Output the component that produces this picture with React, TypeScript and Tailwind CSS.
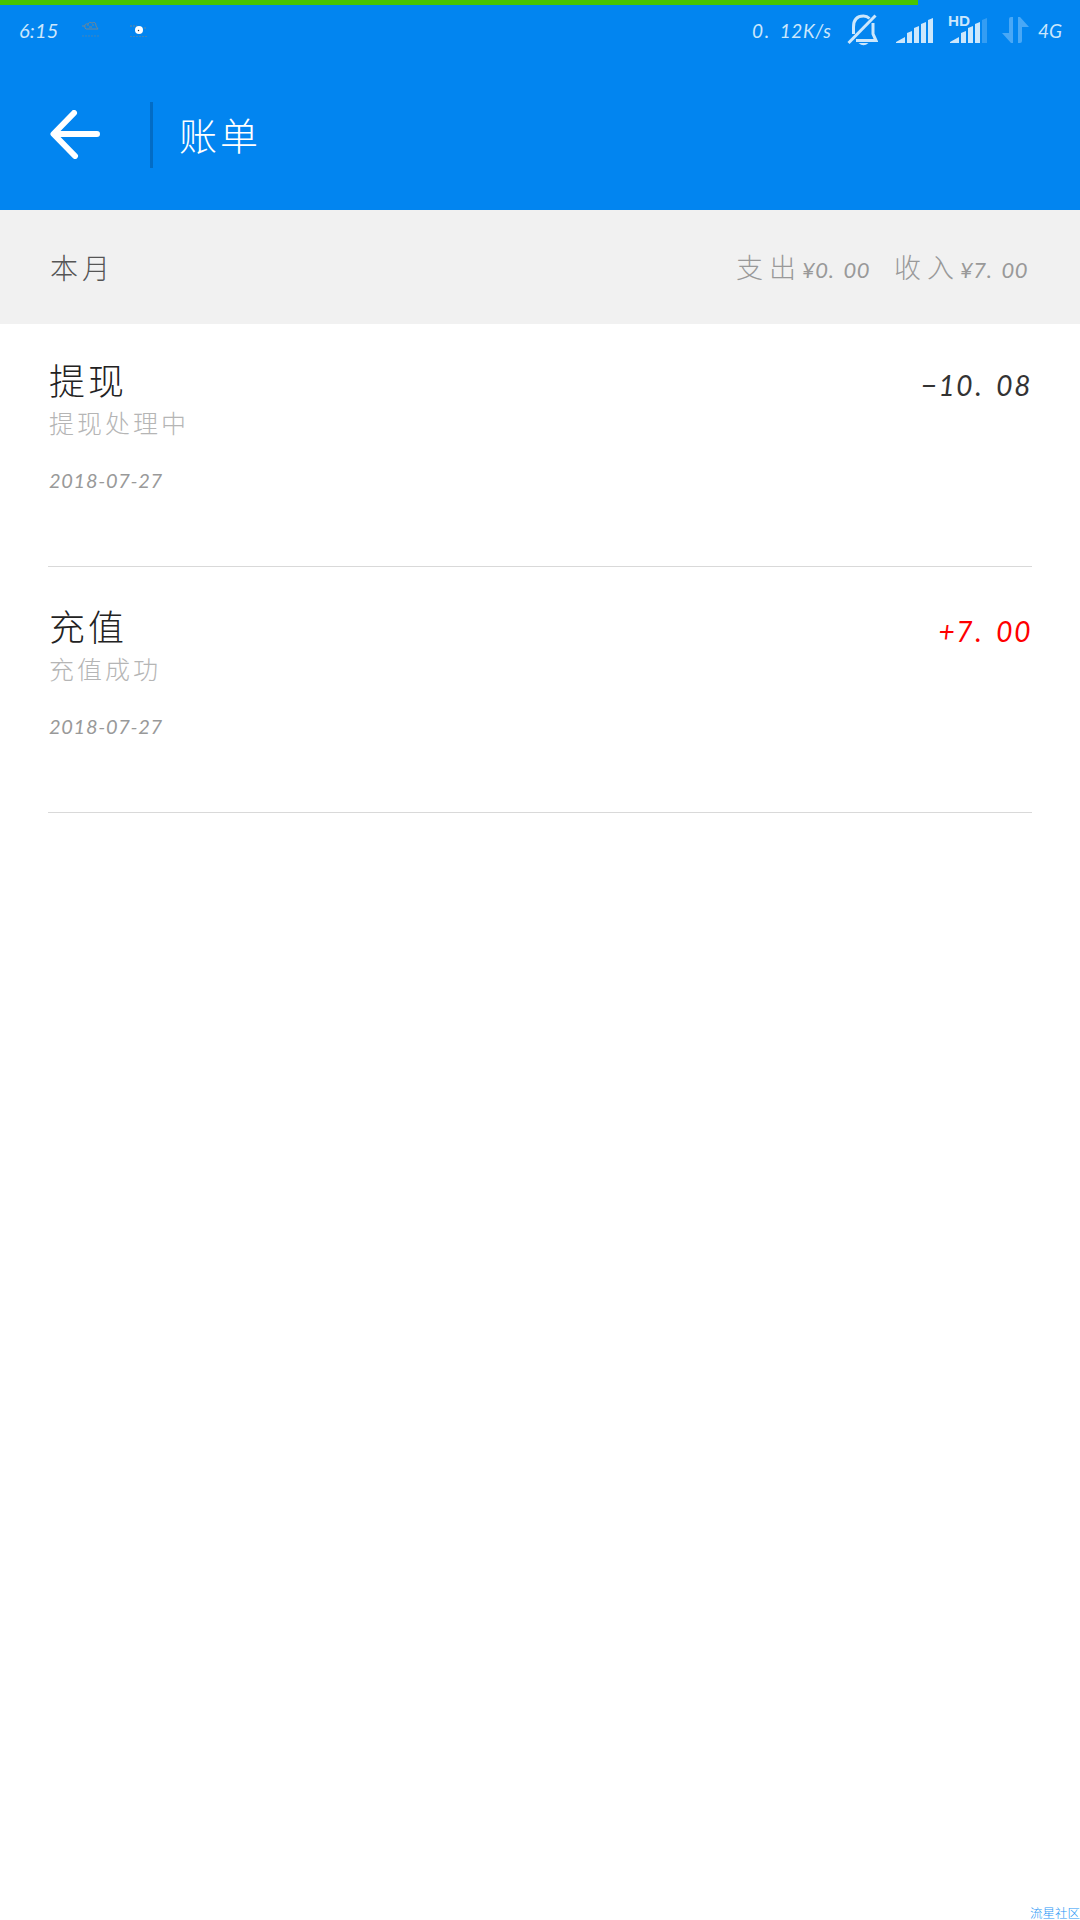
import React from "react";

const cjk = "font-['Noto_Sans_CJK_SC',sans-serif] font-light";
const latin = "font-['Lato','Noto_Sans_CJK_SC',sans-serif] italic";

/* Decimal number whose point occupies a wide cell. */
function Amount({ value, dot, className }: { value: string; dot: string; className: string }) {
  const [whole, fraction] = value.split(".");
  return (
    <span className={`${latin} inline-flex items-baseline whitespace-pre ${className}`}>
      <span>{whole}</span>
      <span className={dot}>.</span>
      <span>{fraction}</span>
    </span>
  );
}

function MutedBell() {
  return (
    <svg className="ml-[15px] h-8 w-[31px] shrink-0" viewBox="0 0 31 32" fill="none" stroke="#cce7fc">
      <path d="M6.500 20V13C6.500 6 10 2 16.500 2C19 2 21 3 22.500 4.500M26 9V20L29 26.500H9" strokeWidth="3" />
      <path d="M1.500 29L28.500 1.500" strokeWidth="3" />
      <path d="M11.500 29H21.500Q16.500 33.500 11.500 29Z" fill="#cce7fc" stroke="none" />
    </svg>
  );
}

function Signal() {
  return (
    <svg className="ml-[18px] h-[25px] w-[37px] shrink-0" viewBox="0 0 37 25" fill="#cce7fc">
      <path d="M0 25V24L9 19V25ZM11 25V15L16 13V25ZM18 25V10L23 8V25ZM25 25V6L30 4V25ZM32 25V2L37 0V25Z" />
    </svg>
  );
}

function SignalHd() {
  return (
    <svg className="ml-[14px] h-[30px] w-[41px] shrink-0" viewBox="0 0 41 30" fill="#cce7fc">
      <text x="1" y="13" fontFamily="Liberation Sans" fontStyle="normal" fontWeight="bold" fontSize="15.500" textLength="22" lengthAdjust="spacingAndGlyphs">HD</text>
      <path d="M3 30V29L12 24V30ZM14 30V20L19 18V30ZM21 30V15L26 13V30ZM28 30V11L33 9V30Z" />
      <path d="M35 30V7L40 5V30Z" opacity=".25" />
    </svg>
  );
}

function DataArrows() {
  return (
    <svg className="ml-[14px] h-[26px] w-[27px] shrink-0" viewBox="0 0 27 26" fill="#49a8f6">
      <path d="M9 2Q9 0 11 0V26H9L0 16H7V2Q7 0 9 0H11V26Z" />
      <path d="M16 0H18L27 10H20V24Q20 26 18 26H16Z" />
    </svg>
  );
}

function StatusBar() {
  return (
    <div className="flex h-[55px] items-start pt-[9px] text-[#cce7fc]">
      <span className={`${latin} ml-[19px] mt-[4px] w-[40px] text-[20px] leading-6 tracking-[0.2px]`}>6:15</span>
      <svg className="ml-[22px] mt-[6px] h-[18px] w-[20px] shrink-0" viewBox="0 0 20 18" fill="none" stroke="#6f8797">
        <path d="M1 6H4M4 8Q3 3 7 4Q8 1 11 3Q15 1 15 6L17 9H5ZM6 5H8M11 5H13M8 7H11" />
        <path d="M1 16H18" strokeDasharray="2 1" opacity=".6" />
      </svg>
      <svg className="ml-[28px] mt-[6px] h-[20px] w-[20px] shrink-0" viewBox="0 0 20 20">
        <path d="M1 6H8M15 8H18" stroke="#6f8797" strokeDasharray="2 1" />
        <path d="M1 16.500H19" stroke="#6f8797" strokeDasharray="2 1" opacity=".6" />
        <circle cx="10" cy="10" r="4" fill="#fff" />
        <circle cx="9.500" cy="10.500" r=".7" fill="#333" />
      </svg>
      <span className="grow" />
      <Amount value="0.12K/s" dot="ml-[1px] mr-[10px]" className="mt-[5px] w-[80px] text-[19px] leading-6 tracking-[0.6px]" />
      <MutedBell />
      <div className="flex h-[29px] items-end">
        <Signal />
        <SignalHd />
        <DataArrows />
      </div>
      <span className={`${latin} ml-[9px] mr-[16px] mt-[5px] w-[26px] text-[19px] leading-6`}>4G</span>
    </div>
  );
}

type Bill = { title: string; status: string; date: string; amount: string; income?: boolean };

const bills: Bill[] = [
  { title: "提现", status: "提现处理中", date: "2018-07-27", amount: "−10.08" },
  { title: "充值", status: "充值成功", date: "2018-07-27", amount: "+7.00", income: true },
];

function BillRow({ bill }: { bill: Bill }) {
  return (
    <li className="flex h-[246px] justify-between border-b border-[#d9d9d9]">
      <div className="flex flex-col pl-px pt-[35px]">
        <span className={`${cjk} text-[36px] leading-[46px] tracking-[3px] text-[#222]`}>{bill.title}</span>
        <span className={`${cjk} mt-[4px] text-[25px] leading-[32px] tracking-[3px] text-[#b5b5b5]`}>{bill.status}</span>
        <span className={`${latin} mt-[30px] text-[20px] leading-6 tracking-[0.7px] text-[#999]`}>{bill.date}</span>
      </div>
      <Amount
        value={bill.amount}
        dot="ml-[1px] mr-[13px]"
        className={
          bill.income
            ? "mt-[46px] h-9 text-[28px] leading-9 tracking-[1.6px] text-[#ff0000]"
            : "mt-[46px] h-9 text-[28px] leading-9 tracking-[1.6px] text-[#333]"
        }
      />
    </li>
  );
}

export default function App() {
  return (
    <div className="flex h-[1920px] w-[1080px] flex-col overflow-hidden bg-white">
      <header className="h-[210px] shrink-0 bg-[#0285f0]">
        <div className="h-[5px] w-[918px] bg-[#48c400]" />
        <StatusBar />
        <div className="flex h-[150px] items-start pt-[42px]">
          <svg className="ml-[50px] mt-[8px] h-[49px] w-[50px]" viewBox="0 0 50 49" fill="none" stroke="#fff" strokeWidth="6" strokeLinecap="round" strokeLinejoin="round">
            <path d="M24 3L3.500 24L25 46M4 24H47" />
          </svg>
          <span className="ml-[50px] h-[66px] w-[3px] bg-[#026cc5]" />
          <h1 className={`${cjk} ml-[26px] text-[38px] leading-[64px] tracking-[3px] text-white`}>账单</h1>
        </div>
      </header>
      <section className="flex h-[114px] shrink-0 items-center justify-between bg-[#f1f1f1] px-[49px]">
        <span className={`${cjk} pl-px text-[28px] tracking-[4px] text-[#555]`}>本月</span>
        <div className="flex items-baseline text-[#999]">
          <span className={`${cjk} text-[27px] tracking-[6px]`}>支出</span>
          <Amount value="¥0.00" dot="mr-[9px]" className="w-[71px] text-[22px] tracking-[0.6px]" />
          <span className={`${cjk} ml-[21px] text-[27px] tracking-[6px]`}>收入</span>
          <Amount value="¥7.00" dot="mr-[9px]" className="w-[71px] text-[22px] tracking-[0.6px]" />
        </div>
      </section>
      <ul className="-mt-[3px] px-12">
        {bills.map((bill) => (
          <BillRow key={bill.title} bill={bill} />
        ))}
      </ul>
      <footer className={`${cjk} mt-auto h-[14px] self-end text-[12.5px] leading-[14px] text-[#1e95f5]`}>流星社区</footer>
    </div>
  );
}
